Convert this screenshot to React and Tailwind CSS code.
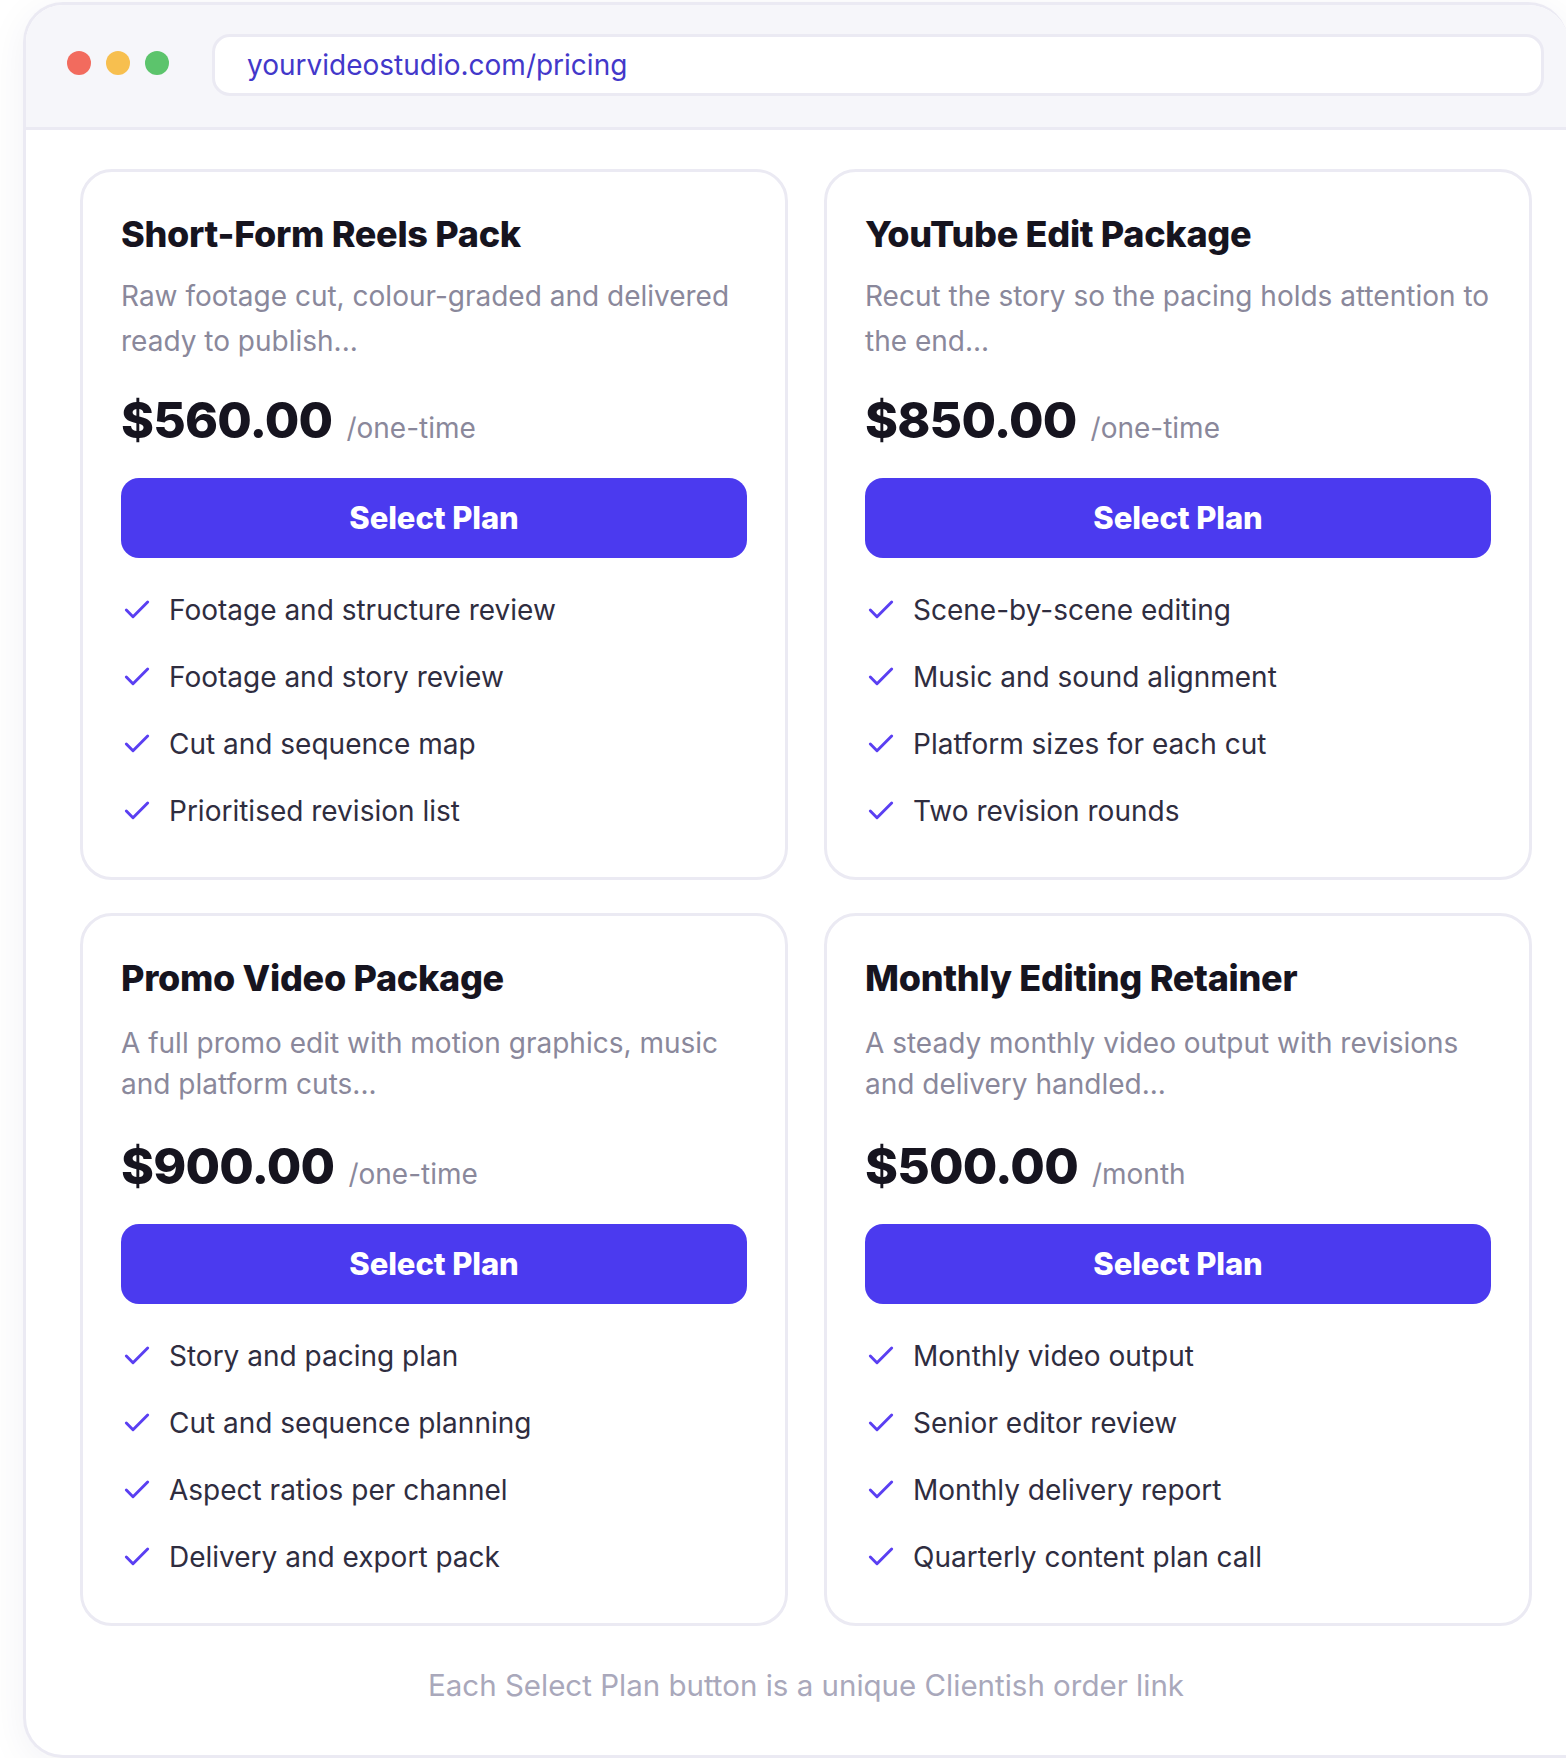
import React from "react";
import { Check } from "lucide-react";

const plans = [
  {
    title: "Short-Form Reels Pack",
    desc: ["Raw footage cut, colour-graded and delivered", "ready to publish..."],
    price: "$560.00",
    unit: "/one-time",
    features: [
      "Footage and structure review",
      "Footage and story review",
      "Cut and sequence map",
      "Prioritised revision list",
    ],
    row2: false,
  },
  {
    title: "YouTube Edit Package",
    desc: ["Recut the story so the pacing holds attention to", "the end..."],
    price: "$850.00",
    unit: "/one-time",
    features: [
      "Scene-by-scene editing",
      "Music and sound alignment",
      "Platform sizes for each cut",
      "Two revision rounds",
    ],
    row2: false,
  },
  {
    title: "Promo Video Package",
    desc: ["A full promo edit with motion graphics, music", "and platform cuts..."],
    price: "$900.00",
    unit: "/one-time",
    features: [
      "Story and pacing plan",
      "Cut and sequence planning",
      "Aspect ratios per channel",
      "Delivery and export pack",
    ],
    row2: true,
  },
  {
    title: "Monthly Editing Retainer",
    desc: ["A steady monthly video output with revisions", "and delivery handled..."],
    price: "$500.00",
    unit: "/month",
    features: [
      "Monthly video output",
      "Senior editor review",
      "Monthly delivery report",
      "Quarterly content plan call",
    ],
    row2: true,
  },
];

function PlanCard({ plan }) {
  return (
    <div className="flex flex-col rounded-[32px] border-[3px] border-[#ebeaf3] bg-white px-[38px] pt-[42px] pb-[45px]">
      <h2 className="text-[36px] leading-[41px] font-extrabold text-[#16141f] tracking-[-0.3px] whitespace-nowrap">
        {plan.title}
      </h2>
      <p
        className={
          plan.row2
            ? "mt-[24px] text-[28px] leading-[41px] text-[#8a889b] whitespace-nowrap"
            : "mt-[19px] text-[28px] leading-[45px] text-[#8a889b] whitespace-nowrap"
        }
      >
        {plan.desc[0]}
        <br />
        {plan.desc[1]}
      </p>
      <div
        className={
          plan.row2
            ? "mt-[36px] flex items-baseline gap-[14px] h-[50px]"
            : "mt-[31px] flex items-baseline gap-[14px] h-[50px]"
        }
      >
        <span className="text-[50px] leading-[50px] font-extrabold text-[#16141f] tracking-[-0.8px]">
          {plan.price}
        </span>
        <span className="text-[28px] leading-[28px] text-[#8a889b]">{plan.unit}</span>
      </div>
      <button className="mt-[33px] h-[80px] w-full rounded-[18px] bg-[#4b3aef] text-[31px] font-extrabold text-white tracking-[-0.1px]">
        Select Plan
      </button>
      <ul className="mt-[31px] flex flex-col gap-[25px]">
        {plan.features.map((f) => (
          <li key={f} className="flex items-center gap-[16px] h-[42px]">
            <Check size={32} strokeWidth={2.2} className="shrink-0 text-[#5a3ff2]" />
            <span className="text-[28px] leading-[42px] text-[#2f2d3f]">{f}</span>
          </li>
        ))}
      </ul>
    </div>
  );
}

export default function App() {
  return (
    <div className="w-[1566px] h-[1758px] overflow-hidden bg-white font-['Inter',sans-serif]">
      <div className="ml-[23px] mt-[2px] w-[1545px] rounded-tl-[40px] rounded-tr-[40px] rounded-bl-[40px] border-t-[3px] border-l-[3px] border-b-[3px] border-[#ebeaf3] bg-white overflow-hidden shadow-[0_8px_40px_rgba(30,30,80,0.06)]">
        <div className="flex h-[125px] items-center bg-[#f6f6fa] pl-[41px] pr-[24px] border-b-[3px] border-[#ebeaf3]">
          <div className="flex items-center gap-[15px] -mt-[6px]">
            <span className="h-[24px] w-[24px] rounded-full bg-[#f26b5e]" />
            <span className="h-[24px] w-[24px] rounded-full bg-[#f7bf4f]" />
            <span className="h-[24px] w-[24px] rounded-full bg-[#5cc46c]" />
          </div>
          <div className="ml-[43px] -mt-[3px] flex h-[62px] flex-1 items-center rounded-[18px] border-[3px] border-[#ebeaf3] bg-white pl-[32px]">
            <span className="text-[28px] text-[#4338ca]">yourvideostudio.com/pricing</span>
          </div>
        </div>
        <div className="pl-[54px] pr-[36px] pt-[39px] pb-[49px]">
          <div className="grid grid-cols-2 gap-x-[36px] gap-y-[33px]">
            {plans.map((p) => (
              <PlanCard key={p.title} plan={p} />
            ))}
          </div>
          <p className="mt-[38px] text-center text-[29.5px] leading-[42px] text-[#a9a8bb]">
            Each Select Plan button is a unique Clientish order link
          </p>
        </div>
      </div>
    </div>
  );
}
